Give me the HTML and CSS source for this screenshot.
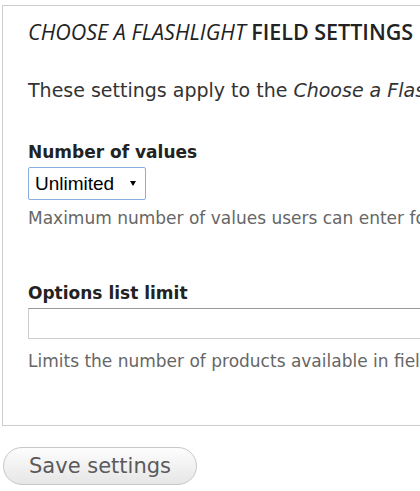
FILE: index.html
```html
<!DOCTYPE html>
<html lang="en">
<head>
    <meta charset="UTF-8">
    <title>Field settings</title>
    <link rel="stylesheet" href="styles.css">
</head>
<body>
    <form class="settings-form">
        <div class="fieldset">
            <h2 class="legend"><em>Choose a Flashlight</em> field settings</h2>
            <p class="intro">These settings apply to the <em>Choose a Flashlight</em> field everywhere it is used.</p>

            <div class="form-item">
                <label for="cardinality">Number of values</label>
                <span class="select-wrap">
                    <select id="cardinality" class="select">
                        <option>Unlimited</option>
                    </select>
                </span>
                <div class="description">Maximum number of values users can enter for this field.</div>
            </div>

            <div class="form-item">
                <label for="options-limit">Options list limit</label>
                <input type="text" id="options-limit" class="text-input">
                <div class="description">Limits the number of products available in field widgets with options lists.</div>
            </div>
        </div>

        <button type="button" class="button">Save settings</button>
    </form>
</body>
</html>
```

FILE: styles.css
```css
html, body {
    margin: 0;
    padding: 0;
    overflow: hidden;
}

body {
    font-family: "DejaVu Sans", Verdana, sans-serif;
    color: #333;
    background-color: #fff;
}

.settings-form {
    width: 700px;
}

.fieldset {
    margin: 5px 0 0 2px;
    border: 1px solid #ccc;
    border-right: none;
    padding: 16px 0 0 25px;
    height: 403px;
}

.legend {
    margin: 0;
    font-family: "Open Sans", "DejaVu Sans", sans-serif;
    font-size: 21.5px;
    font-weight: 600;
    text-transform: uppercase;
    color: #222;
    line-height: 20px;
    letter-spacing: 0;
}

.legend em {
    font-weight: normal;
}

.intro {
    margin: 36px 0 0;
    font-size: 19px;
    line-height: 24px;
    white-space: nowrap;
}

.form-item {
    margin-top: 39px;
}

.form-item + .form-item {
    margin-top: 53px;
}

.form-item label {
    display: block;
    font-weight: bold;
    font-size: 17px;
    line-height: 22px;
    color: #222;
}

.select-wrap {
    position: relative;
    display: block;
    width: 118px;
    margin-top: 4px;
}

.select-wrap::after {
    content: "";
    position: absolute;
    right: 10px;
    top: 14px;
    border-left: 3px solid transparent;
    border-right: 3px solid transparent;
    border-top: 5px solid #000;
    pointer-events: none;
}

.select {
    display: block;
    width: 118px;
    height: 33px;
    appearance: none;
    -webkit-appearance: none;
    font-family: "Liberation Sans", Arial, sans-serif;
    font-size: 19px;
    color: #000;
    background-color: #fff;
    border: 1px solid #88aee0;
    border-radius: 2px;
    padding: 0 6px;
}

.text-input {
    display: block;
    margin-top: 4px;
    width: 600px;
    height: 31px;
    box-sizing: border-box;
    border: 1px solid #ccc;
    border-top-color: #999;
    background-color: #fff;
}

.description {
    margin-top: 7px;
    font-size: 17px;
    line-height: 22px;
    color: #666;
    white-space: nowrap;
}

.text-input + .description {
    margin-top: 11px;
}

.button {
    margin: 21px 0 0 3px;
    width: 194px;
    height: 38px;
    border: 1px solid #c8c8c8;
    border-radius: 20px;
    background: linear-gradient(#fdfdfd, #e6e6e6);
    font-family: "DejaVu Sans", Verdana, sans-serif;
    font-size: 21px;
    color: #5a5a5a;
    cursor: pointer;
}
```
